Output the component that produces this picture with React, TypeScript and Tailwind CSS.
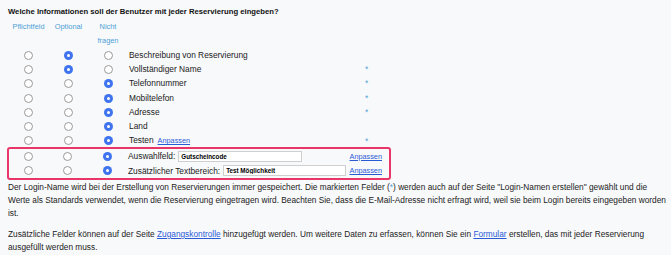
import React from "react";

type Choice = 0 | 1 | 2;

const Radio = ({ on }: { on: boolean }) =>
  on ? (
    <span className="flex h-[9px] w-[9px] items-center justify-center rounded-full bg-[#3f74ee]">
      <span className="h-[3px] w-[3px] rounded-full bg-white" />
    </span>
  ) : (
    <span className="h-[9px] w-[9px] rounded-full border border-[#9a9a9a] bg-white" />
  );

const RadioCells = ({ pick, inset = false }: { pick: Choice; inset?: boolean }) => (
  <>
    <div className={`flex items-center justify-center ${inset ? "w-[39px]" : "w-[41px]"}`}>
      <Radio on={pick === 0} />
    </div>
    <div className="flex w-[39px] items-center justify-center">
      <Radio on={pick === 1} />
    </div>
    <div className="flex w-[40px] items-center justify-center">
      <Radio on={pick === 2} />
    </div>
  </>
);

const rows: { label: string; pick: Choice; star?: boolean; link?: boolean }[] = [
  { label: "Beschreibung von Reservierung", pick: 1 },
  { label: "Vollständiger Name", pick: 1, star: true },
  { label: "Telefonnummer", pick: 2, star: true },
  { label: "Mobiltelefon", pick: 2, star: true },
  { label: "Adresse", pick: 2, star: true },
  { label: "Land", pick: 2 },
  { label: "Testen", pick: 2, star: true, link: true },
];

const Link = ({ children, small = false }: { children: React.ReactNode; small?: boolean }) => (
  <a href="#" className={`text-[#2a5bd7] underline ${small ? "text-[7.3px]" : ""}`}>
    {children}
  </a>
);

const inputCls =
  "ml-[3px] h-[11px] border border-[#cfcfcf] bg-white px-[2px] text-[6.3px] font-bold text-black outline-none";

export default function App() {
  return (
    <div
      className="h-[255px] w-[671px] overflow-hidden bg-[#f8f9fb] pl-2 pt-[6px] text-[8.35px] text-[#222]"
      style={{ fontFamily: '"Liberation Sans", Arial, sans-serif' }}
    >
      <h3 className="text-[7.7px] font-bold leading-[12px] text-[#111]">
        Welche Informationen soll der Benutzer mit jeder Reservierung eingeben?
      </h3>

      {/* column headers */}
      <div className="mt-[2px] flex text-[7.4px] leading-[14px] text-[#4d9fd6]">
        <div className="w-[41px] text-center">Pflichtfeld</div>
        <div className="w-[39px] text-center">Optional</div>
        <div className="w-[40px] text-center">
          Nicht
          <br />
          fragen
        </div>
      </div>

      {rows.map((r) => (
        <div key={r.label} className="flex h-[14.3px] items-center">
          <RadioCells pick={r.pick} />
          <div className="w-[237px] whitespace-nowrap pl-[1px]">
            {r.label}
            {r.link && (
              <span className="ml-[4px]">
                <Link small>Anpassen</Link>
              </span>
            )}
          </div>
          {r.star && <span className="text-[#4d9fd6]">*</span>}
        </div>
      ))}

      {/* highlighted custom fields */}
      <div className="-ml-[1px] -mt-[1px] w-[384px] rounded-[3px] border-2 border-[#ea3568]">
        <div className="flex h-[14.5px] items-center">
          <RadioCells pick={2} inset />
          <div className="flex flex-1 items-center whitespace-nowrap pl-[1px]">
            <span>Auswahlfeld:</span>
            <input readOnly value="Gutscheincode" className={`${inputCls} w-[124px]`} />
            <span className="ml-auto mr-[7px]">
              <Link small>Anpassen</Link>
            </span>
          </div>
        </div>
        <div className="flex h-[14.5px] items-center">
          <RadioCells pick={2} inset />
          <div className="flex flex-1 items-center whitespace-nowrap pl-[1px]">
            <span>Zusätzlicher Textbereich:</span>
            <input readOnly value="Test Möglichkeit" className={`${inputCls} w-[123px]`} />
            <span className="ml-auto mr-[7px]">
              <Link small>Anpassen</Link>
            </span>
          </div>
        </div>
      </div>

      <p className="mt-[1px] text-[8.3px] leading-[13px]">
        Der Login-Name wird bei der Erstellung von Reservierungen immer gespeichert. Die markierten Felder (
        <span className="text-[#4d9fd6]">*</span>) werden auch auf der Seite "Login-Namen erstellen" gewählt und die
        Werte als Standards verwendet, wenn die Reservierung eingetragen wird. Beachten Sie, dass die E-Mail-Adresse
        nicht erfragt wird, weil sie beim Login bereits eingegeben worden ist.
      </p>
      <p className="mt-[8px] pr-[8px] text-[8.3px] leading-[13px]">
        Zusätzliche Felder können auf der Seite <Link>Zugangskontrolle</Link> hinzugefügt werden. Um weitere Daten zu
        erfassen, können Sie ein <Link>Formular</Link> erstellen, das mit jeder Reservierung ausgefüllt werden muss.
      </p>
    </div>
  );
}
